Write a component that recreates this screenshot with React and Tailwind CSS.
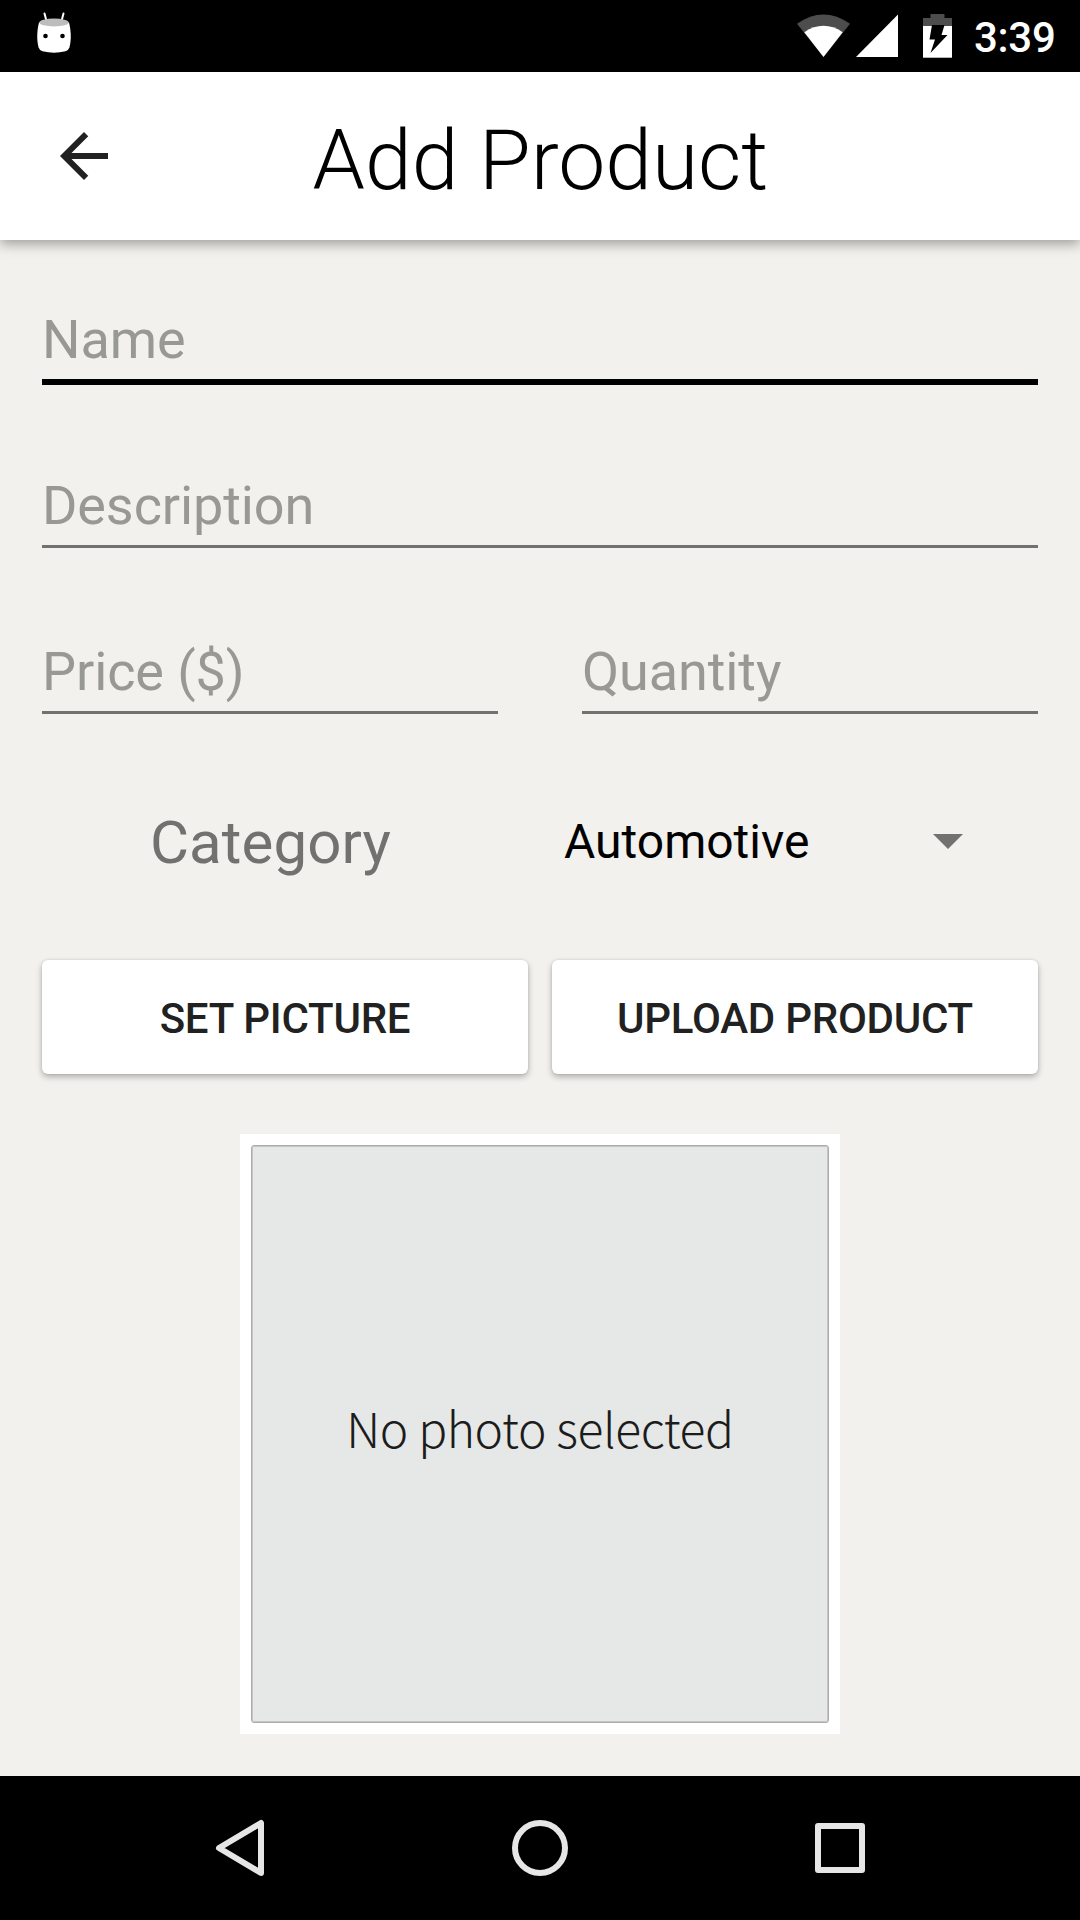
function StatusBar() {
  return (
    <div className="flex h-[72px] items-center justify-between bg-black pr-[25px] pl-[36px]">
      <svg width="36" height="72" viewBox="36 0 36 72">
        <path d="M44.5 13.5 47 23M63.5 13.5 61 23" stroke="#fff" strokeWidth="2" strokeLinecap="round" />
        <path d="M39 22.5C37 30 36.500 40 38.600 47.500Q39.500 50.500 42.500 51.300Q54 54 65.500 51.300Q68.500 50.500 69.400 47.500C71.500 40 71 30 69 22.500Z" fill="#fff" />
        <ellipse cx="54" cy="22.500" rx="14.700" ry="3.900" fill="#bdbdbd" />
        <circle cx="45.500" cy="36" r="2.300" fill="#000" />
        <circle cx="62.500" cy="36" r="2.300" fill="#000" />
      </svg>
      <div className="flex items-center">
        <svg width="178" height="72" viewBox="796 0 178 72">
          <path d="M797 23.800Q823.500 5 850 23.800L823.500 57Z" fill="#4d4d4d" />
          <path d="M804.300 32.200Q823.500 19.500 842.700 32.200L823.500 57Z" fill="#fff" />
          <path d="M856 57L898 14.500V57Z" fill="#fff" />
          <path d="M923 26V18H930.500V14H944.500V18H952V26Z" fill="#4d4d4d" />
          <path d="M923 26H952V57.700H923Z" fill="#fff" />
          <path d="M932 25H944.500L941.500 35H947.500L930.500 53L935 39.500H929.500Z" fill="#000" />
        </svg>
        <span className="w-[81px] pt-[3px] text-[42px] leading-[69px] font-medium tracking-[-0.3px] whitespace-nowrap text-white">
          3:39
        </span>
      </div>
    </div>
  );
}

function AppBar() {
  return (
    <header className="z-10 grid h-[168px] grid-cols-[168px_1fr_168px] items-center bg-white shadow-[0_4px_12px_rgba(0,0,0,0.35)]">
      <svg className="ml-12" width="72" height="72" viewBox="0 0 24 24" fill="#212121">
        <path d="M20 11H7.830l5.590-5.590L12 4l-8 8 8 8 1.410-1.410L7.830 13H20v-2z" />
      </svg>
      <h1 className="pt-[10px] pl-px text-center text-[84px] leading-[158px] font-light whitespace-nowrap text-black">
        Add Product
      </h1>
    </header>
  );
}

function Field({ label, focused }) {
  return (
    <div
      className={
        focused
          ? "h-[82px] border-b-[6px] border-black text-[54px] leading-[73px] tracking-[-0.1px] text-[#989894]"
          : "h-[79px] border-b-[3px] border-[#71716f] text-[54px] leading-[73px] tracking-[-0.1px] text-[#989894]"
      }
    >
      {label}
    </div>
  );
}

function RaisedButton({ children }) {
  return (
    <button className="h-[114px] flex-1 rounded-[6px] bg-white pt-[3px] text-[42px] font-medium tracking-[-0.25px] text-[#212121] shadow-[0_3px_6px_rgba(0,0,0,0.27),0_0_3px_rgba(0,0,0,0.1)]">
      {children}
    </button>
  );
}

function NavBar() {
  return (
    <nav className="grid h-[144px] grid-cols-3 items-center bg-black px-[90px]">
      <svg className="mx-auto" width="60" height="60" viewBox="0 0 60 60" fill="none" stroke="#e6e6e6" strokeWidth="6" strokeLinejoin="round">
        <path d="M51 5V55L9 30Z" />
      </svg>
      <svg className="mx-auto" width="60" height="60" viewBox="0 0 60 60" fill="none" stroke="#e6e6e6" strokeWidth="6">
        <circle cx="30" cy="30" r="25" />
      </svg>
      <svg className="mx-auto" width="60" height="60" viewBox="0 0 60 60" fill="none" stroke="#e6e6e6" strokeWidth="6" strokeLinejoin="round">
        <path d="M8 8H52V52H8Z" />
      </svg>
    </nav>
  );
}

export default function App() {
  return (
    <div className="flex h-[1920px] w-[1080px] flex-col bg-[#f2f1ed] font-['Roboto',sans-serif]">
      <StatusBar />
      <AppBar />
      <main className="flex flex-1 flex-col px-[42px] pt-[63px]">
        <Field label="Name" focused />
        <div className="mt-[84px]">
          <Field label="Description" />
        </div>
        <div className="mt-[87px] grid grid-cols-2 gap-[84px]">
          <Field label="Price ($)" />
          <Field label="Quantity" />
        </div>
        <div className="-mx-[42px] mt-[68px] flex h-[120px] items-center">
          <div className="w-[540px] pt-[2px] pl-px text-center text-[60px] tracking-[0.1px] text-[#71716f]">Category</div>
          <div className="flex flex-1 items-center justify-between pr-[117px] pl-6 text-[48px] text-black">
            Automotive
            <svg className="mb-[2px]" width="30" height="15" viewBox="0 0 30 15" fill="#71716f">
              <path d="M0 0H30L15 15Z" />
            </svg>
          </div>
        </div>
        <div className="mt-[58px] flex gap-6">
          <RaisedButton>SET PICTURE</RaisedButton>
          <RaisedButton>UPLOAD PRODUCT</RaisedButton>
        </div>
        <div className="mx-auto mt-[60px] h-[600px] w-[600px] bg-white p-[11px]">
          <div className="flex h-full items-center justify-center rounded-[3px] border border-[#acacac] bg-[#e5e8e6] pb-[14px] shadow-[inset_0_0_0_1px_#c4c5c4]">
            <span className="font-['Noto_Sans_CJK_SC',sans-serif] text-[48px] font-light tracking-[-0.4px] whitespace-nowrap text-[#1c1c1c]">
              No photo selected
            </span>
          </div>
        </div>
      </main>
      <NavBar />
    </div>
  );
}
